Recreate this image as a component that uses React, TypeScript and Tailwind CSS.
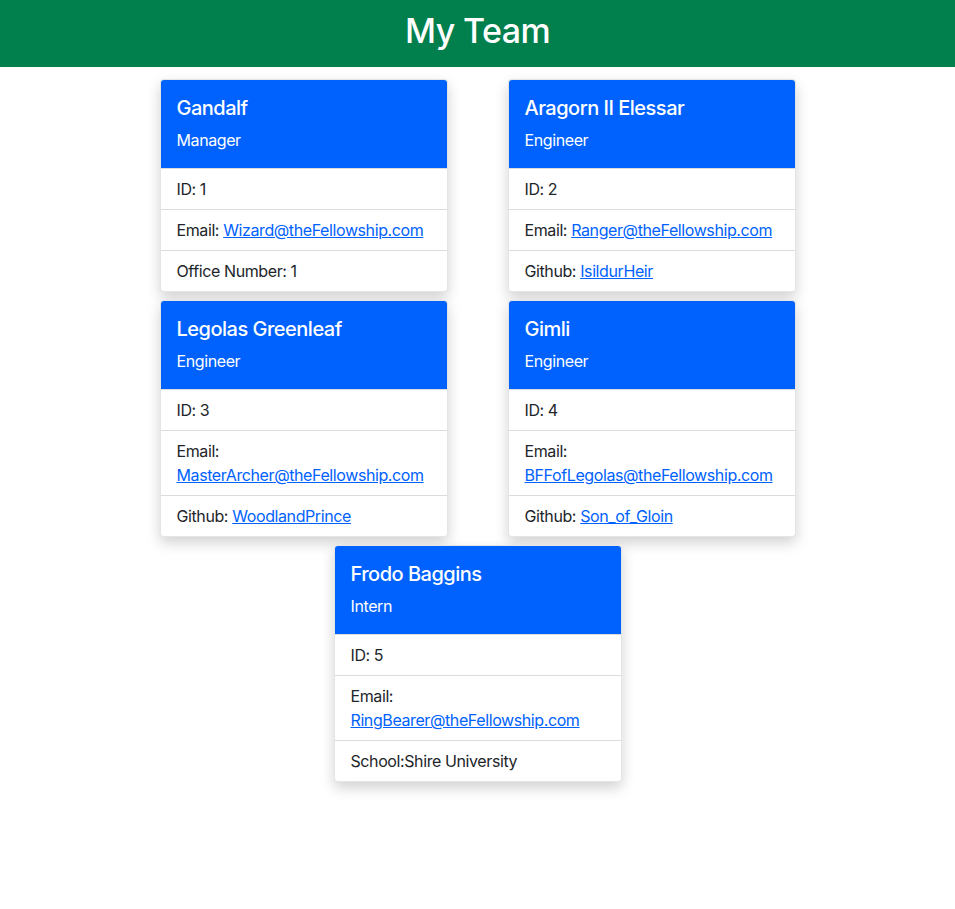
const team = [
  { name: "Gandalf", role: "Manager", id: 1, email: "Wizard@theFellowship.com", extra: { label: "Office Number: ", value: "1" } },
  { name: "Aragorn II Elessar", role: "Engineer", id: 2, email: "Ranger@theFellowship.com", extra: { label: "Github: ", value: "IsildurHeir", link: true } },
  { name: "Legolas Greenleaf", role: "Engineer", id: 3, email: "MasterArcher@theFellowship.com", extra: { label: "Github: ", value: "WoodlandPrince", link: true } },
  { name: "Gimli", role: "Engineer", id: 4, email: "BFFofLegolas@theFellowship.com", extra: { label: "Github: ", value: "Son_of_Gloin", link: true } },
  { name: "Frodo Baggins", role: "Intern", id: 5, email: "RingBearer@theFellowship.com", extra: { label: "School:", value: "Shire University" } },
];

type Member = (typeof team)[number];

function Card({ m }: { m: Member }) {
  return (
    <div className="w-[288px] mx-auto rounded border border-black/10 bg-white shadow-[0_6px_14px_rgba(0,0,0,0.18)] overflow-hidden">
      <div className="bg-[#0062fe] text-white px-4 pt-4 pb-4">
        <h5 className="text-[20px] leading-[24px] font-medium mb-2 tracking-[-0.5px]">{m.name}</h5>
        <h6 className="text-[16px] leading-[24px] font-normal tracking-[-0.4px]">{m.role}</h6>
      </div>
      <ul className="text-[16px] leading-[24px] text-[#212529] tracking-[-0.4px]">
        <li className="px-4 py-2 border-t border-[#dcdcdc]">ID: {m.id}</li>
        <li className="px-4 py-2 border-t border-[#dcdcdc]">
          Email: <a href={`mailto:${m.email}`} className="text-[#0062fe] underline">{m.email}</a>
        </li>
        <li className="px-4 py-2 border-t border-[#dcdcdc]">
          {m.extra.label}
          {"link" in m.extra && m.extra.link ? (
            <a href="#" className="text-[#0062fe] underline">{m.extra.value}</a>
          ) : (
            m.extra.value
          )}
        </li>
      </ul>
    </div>
  );
}

export default function App() {
  return (
    <div className="min-h-screen bg-white font-['Inter',sans-serif]">
      <header className="h-[67px] bg-[#017f4d] flex items-center justify-center pb-[7px]">
        <h1 className="text-white text-[34px] font-medium tracking-[-0.6px]">My Team</h1>
      </header>
      <main className="w-[696px] mx-auto mt-[12px] flex flex-wrap justify-center">
        {team.map((m) => (
          <div key={m.id} className="w-[348px] mb-[8px]">
            <Card m={m} />
          </div>
        ))}
      </main>
    </div>
  );
}
